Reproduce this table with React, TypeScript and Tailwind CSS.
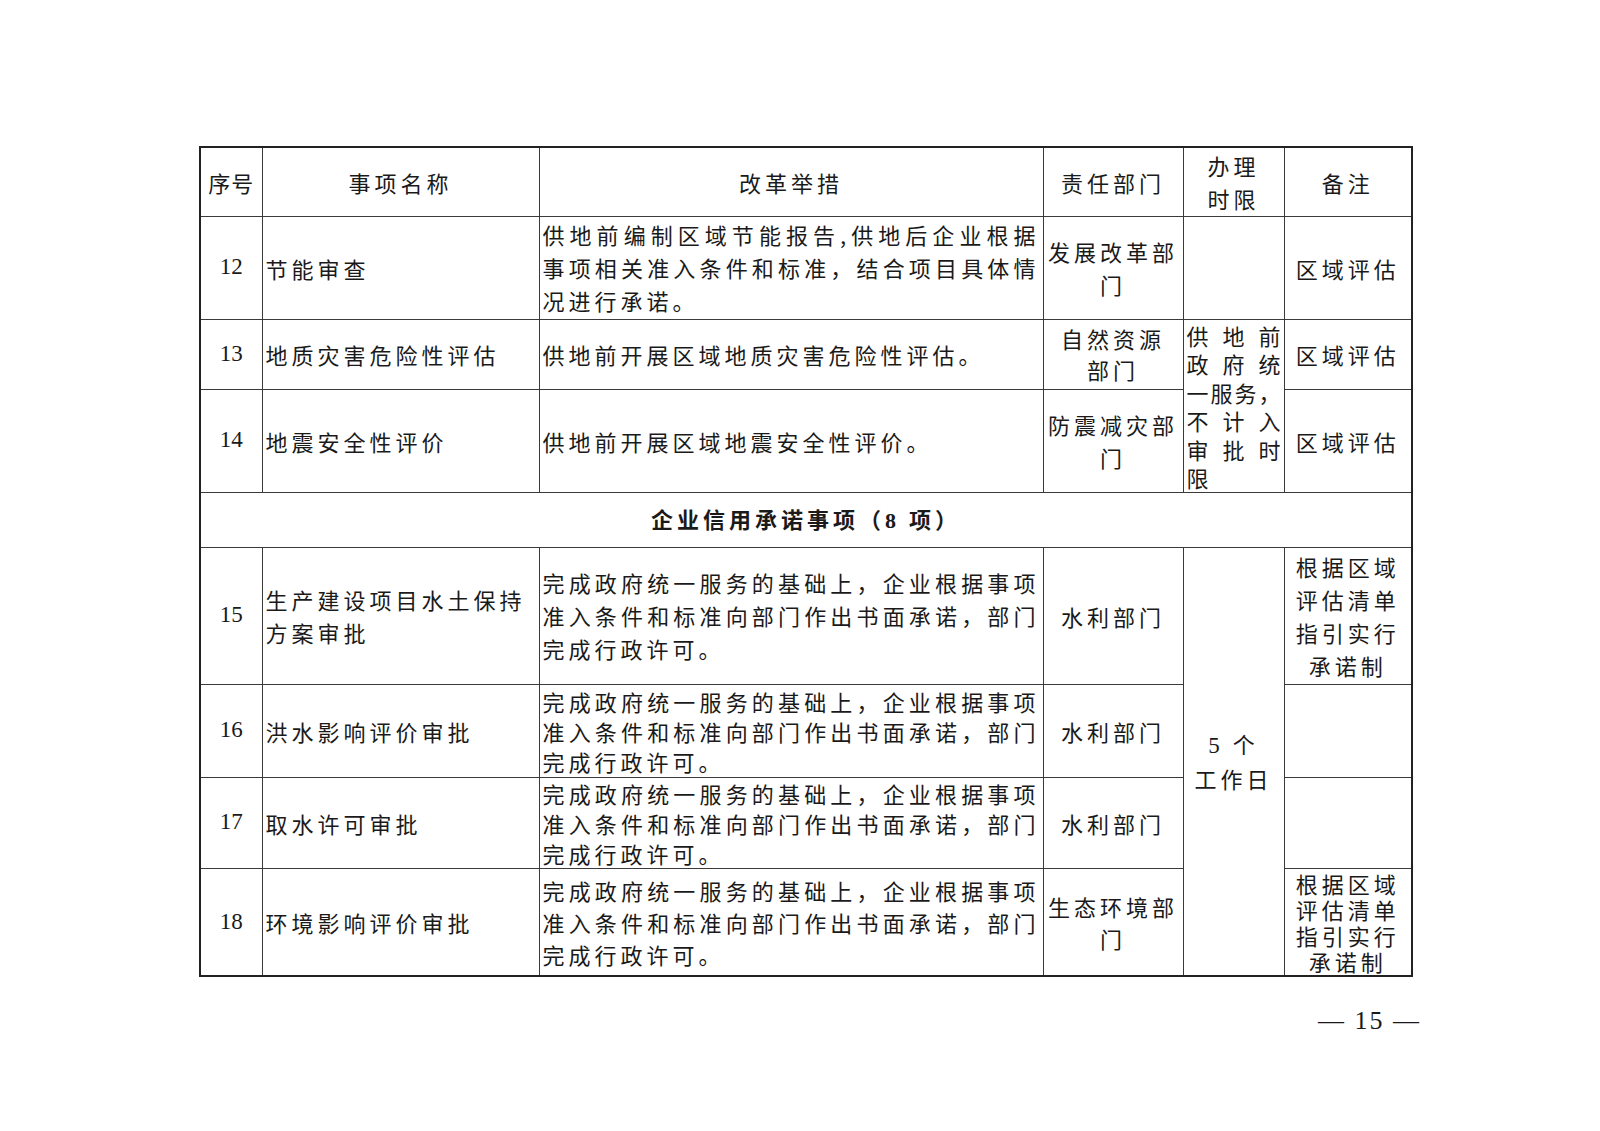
import React from "react";

const base = "border border-[#3a3a3a] text-[22px] text-[#1a1a1a] p-0";
const num = `${base} text-center align-middle font-['Liberation_Serif',serif] text-[23px]`;
const left = (lh: string) => `${base} tracking-[4px] text-left align-middle pl-[3px] ${lh}`;
const center = (lh: string, tr = "tracking-[4px]") => `${base} ${tr} text-center align-middle ${lh}`;

const Line = ({ children }: { children: React.ReactNode }) => (
  <div className="[text-align-last:justify]">{children}</div>
);

const Spread = ({ chars }: { chars: string[] }) => (
  <div className="flex justify-between">
    {chars.map((c, i) => (
      <span key={i}>{c}</span>
    ))}
  </div>
);

const Promise = ({ lh }: { lh: string }) => (
  <div className={`px-[3px] tracking-[4px] ${lh}`}>
    <Line>完成政府统一服务的基础上，企业根据事项</Line>
    <Line>准入条件和标准向部门作出书面承诺，部门</Line>
    <div>完成行政许可。</div>
  </div>
);

const App = () => {
  return (
    <div className="w-[1600px] h-[1131px] bg-white font-['Noto_Sans_CJK_SC',sans-serif]">
      <div className="pt-[146px] pl-[199px]">
        <table className="table-fixed border-collapse border-2 border-[#222] w-[1212px]">
          <colgroup>
            <col className="w-[62px]" />
            <col className="w-[277px]" />
            <col className="w-[504px]" />
            <col className="w-[140px]" />
            <col className="w-[101px]" />
            <col className="w-[128px]" />
          </colgroup>
          <tbody>
            <tr className="h-[69px]">
              <td className={center("leading-[34px]", "tracking-[1px]")}>序号</td>
              <td className={center("leading-[34px]")}>事项名称</td>
              <td className={center("leading-[34px]")}>改革举措</td>
              <td className={center("leading-[34px]")}>责任部门</td>
              <td className={center("leading-[33px]")}>
                办理
                <br />
                时限
              </td>
              <td className={center("leading-[34px]")}>备注</td>
            </tr>
            <tr className="h-[103px]">
              <td className={num}>12</td>
              <td className={left("leading-[34px]")}>节能审查</td>
              <td className={`${base} align-middle`}>
                <div className="px-[3px] tracking-[4px] leading-[33px]">
                  <Line>供地前编制区域节能报告,供地后企业根据</Line>
                  <Line>事项相关准入条件和标准，结合项目具体情</Line>
                  <div>况进行承诺。</div>
                </div>
              </td>
              <td className={center("leading-[33px]")}>
                发展改革部
                <br />门
              </td>
              <td className={base}></td>
              <td className={center("leading-[34px]")}>区域评估</td>
            </tr>
            <tr className="h-[70px]">
              <td className={num}>13</td>
              <td className={left("leading-[34px]")}>地质灾害危险性评估</td>
              <td className={left("leading-[34px]")}>供地前开展区域地质灾害危险性评估。</td>
              <td className={center("leading-[31px]")}>
                自然资源
                <br />
                部门
              </td>
              <td rowSpan={2} className={`${base} align-top leading-[28.5px] px-[3px] pt-[1px]`}>
                <Spread chars={["供", "地", "前"]} />
                <Spread chars={["政", "府", "统"]} />
                <Spread chars={["一", "服", "务", "，"]} />
                <Spread chars={["不", "计", "入"]} />
                <Spread chars={["审", "批", "时"]} />
                <div>限</div>
              </td>
              <td className={center("leading-[34px]")}>区域评估</td>
            </tr>
            <tr className="h-[103px]">
              <td className={num}>14</td>
              <td className={left("leading-[34px]")}>地震安全性评价</td>
              <td className={left("leading-[34px]")}>供地前开展区域地震安全性评价。</td>
              <td className={center("leading-[33px]")}>
                防震减灾部
                <br />门
              </td>
              <td className={center("leading-[34px]")}>区域评估</td>
            </tr>
            <tr className="h-[55px]">
              <td colSpan={6} className={`${center("leading-[34px]", "tracking-[4px]")} font-bold`}>
                企业信用承诺事项（<span className="font-['Liberation_Serif',serif]">8</span> 项）
              </td>
            </tr>
            <tr className="h-[137px]">
              <td className={num}>15</td>
              <td className={left("leading-[33px]")}>
                生产建设项目水土保持
                <br />
                方案审批
              </td>
              <td className={`${base} align-middle`}>
                <Promise lh="leading-[33px]" />
              </td>
              <td className={center("leading-[34px]")}>水利部门</td>
              <td rowSpan={4} className={center("leading-[33px]")}>
                <span className="font-['Liberation_Serif',serif] text-[23px]">5</span> 个
                <br />
                工作日
              </td>
              <td className={center("leading-[33px]")}>
                根据区域
                <br />
                评估清单
                <br />
                指引实行
                <br />
                承诺制
              </td>
            </tr>
            <tr className="h-[93px]">
              <td className={num}>16</td>
              <td className={left("leading-[34px]")}>洪水影响评价审批</td>
              <td className={`${base} align-middle`}>
                <Promise lh="leading-[30px]" />
              </td>
              <td className={center("leading-[34px]")}>水利部门</td>
              <td className={base}></td>
            </tr>
            <tr className="h-[91px]">
              <td className={num}>17</td>
              <td className={left("leading-[34px]")}>取水许可审批</td>
              <td className={`${base} align-middle`}>
                <Promise lh="leading-[30px]" />
              </td>
              <td className={center("leading-[34px]")}>水利部门</td>
              <td className={base}></td>
            </tr>
            <tr className="h-[108px]">
              <td className={num}>18</td>
              <td className={left("leading-[34px]")}>环境影响评价审批</td>
              <td className={`${base} align-middle`}>
                <Promise lh="leading-[32px]" />
              </td>
              <td className={center("leading-[32px]")}>
                生态环境部
                <br />门
              </td>
              <td className={center("leading-[26px]")}>
                根据区域
                <br />
                评估清单
                <br />
                指引实行
                <br />
                承诺制
              </td>
            </tr>
          </tbody>
        </table>
      </div>
      <div className="flex justify-end pr-[179px] pt-[24px]">
        <div className="text-[26px] text-[#1a1a1a] font-['Liberation_Serif',serif] tracking-[2px]">
          — 15 —
        </div>
      </div>
    </div>
  );
};

export default App;
